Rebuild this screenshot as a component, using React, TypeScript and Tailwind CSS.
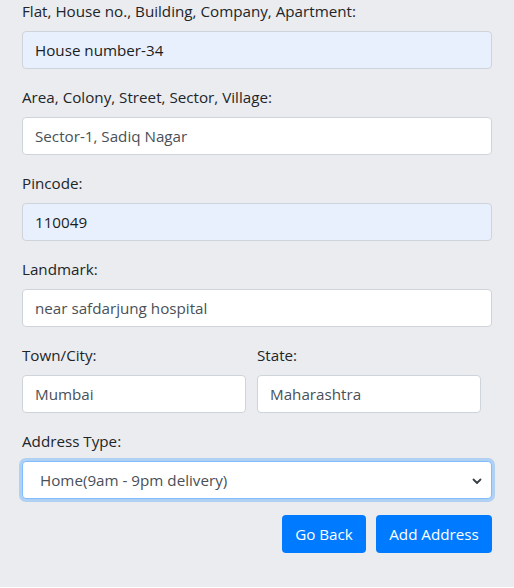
import React from "react";

const inputBase =
  "block w-full h-[38px] px-3 pt-[1px] rounded-[4px] border border-[#ced4da] leading-[35px]";

function Field({ label, value, filled }: { label: string; value: string; filled?: boolean }) {
  return (
    <div className="mb-4">
      <label className="block mb-2 leading-6 text-[#212529]">{label}</label>
      <div className={`${inputBase} ${filled ? "bg-[#e8f0fe] text-[#1a1d21]" : "bg-white text-[#495057]"}`}>
        {value}
      </div>
    </div>
  );
}

export default function App() {
  return (
    <div
      className="min-h-[588px] w-[514px] bg-[#ebecf0] text-[15.2px]"
      style={{ fontFamily: '"Open Sans", "Noto Sans", sans-serif' }}
    >
      <form className="px-[22px] mt-[-1px]">
        <Field label="Flat, House no., Building, Company, Apartment:" value="House number-34" filled />
        <Field label="Area, Colony, Street, Sector, Village:" value="Sector-1, Sadiq Nagar" />
        <Field label="Pincode:" value="110049" filled />
        <Field label="Landmark:" value="near safdarjung hospital" />
        <div className="flex gap-[11px] mb-4">
          <div className="w-[224px]">
            <label className="block mb-2 leading-6 text-[#212529]">Town/City:</label>
            <div className={`${inputBase} bg-white text-[#495057]`}>Mumbai</div>
          </div>
          <div className="w-[224px]">
            <label className="block mb-2 leading-6 text-[#212529]">State:</label>
            <div className={`${inputBase} bg-white text-[#495057]`}>Maharashtra</div>
          </div>
        </div>
        <div className="mb-4">
          <label className="block mb-2 leading-6 text-[#212529]">Address Type:</label>
          <div className="flex items-center justify-between h-[38px] pl-[17px] pr-[8px] pt-[1px] rounded-[4px] border border-[#80bdff] bg-white text-[#495057] shadow-[0_0_0_3px_rgba(0,123,255,0.25)]">
            <span>Home(9am - 9pm delivery)</span>
            <svg width="12" height="12" viewBox="0 0 12 12" fill="none">
              <path d="M2.5 4.5 6 8l3.5-3.5" stroke="#3a3f45" strokeWidth="1.8" strokeLinecap="round" strokeLinejoin="round" />
            </svg>
          </div>
        </div>
        <div className="flex justify-end gap-[10px]">
          <button type="button" className="h-[38px] w-[84px] rounded-[4px] bg-[#007bff] text-white">
            Go Back
          </button>
          <button type="button" className="h-[38px] w-[116px] rounded-[4px] bg-[#007bff] text-white">
            Add Address
          </button>
        </div>
      </form>
    </div>
  );
}
